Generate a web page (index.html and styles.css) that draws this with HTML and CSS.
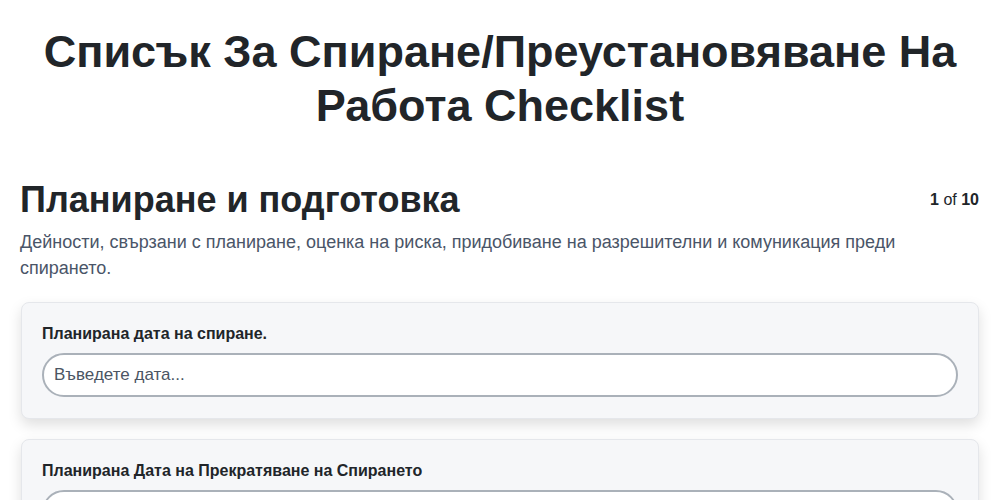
FILE: index.html
```html
<!DOCTYPE html>
<html lang="bg">
<head>
<meta charset="utf-8">
<link rel="stylesheet" href="styles.css">
</head>
<body>
<div class="page">
  <h1 class="title">Списък За Спиране/Преустановяване На Работа Checklist</h1>
  <section class="section">
    <div class="section-head">
      <h2 class="section-title">Планиране и подготовка</h2>
      <div class="counter"><b>1</b> of <b>10</b></div>
    </div>
    <p class="section-desc">Дейности, свързани с планиране, оценка на риска, придобиване на разрешителни и комуникация преди спирането.</p>
    <div class="card">
      <label class="field-label">Планирана дата на спиране.</label>
      <input class="field-input" type="text" placeholder="Въведете дата...">
    </div>
    <div class="card">
      <label class="field-label">Планирана Дата на Прекратяване на Спирането</label>
      <input class="field-input" type="text" placeholder="Въведете дата...">
    </div>
  </section>
</div>
</body>
</html>
```

FILE: styles.css
```css
html, body {
  margin: 0;
  padding: 0;
  background: #ffffff;
  font-family: "Liberation Sans", Arial, sans-serif;
  color: #212529;
}
.page {
  padding: 0 20px;
}
.title {
  margin: 25px 0 0;
  font-size: 45px;
  line-height: 54px;
  font-weight: 700;
  text-align: center;
  color: #212529;
}
.section {
  margin-top: 45px;
}
.section-head {
  display: flex;
  justify-content: space-between;
  align-items: center;
}
.section-title {
  margin: 0;
  font-size: 36px;
  line-height: 43px;
  font-weight: 700;
  color: #212529;
}
.counter {
  font-size: 16px;
  color: #212529;
  margin-right: 1px;
}
.section-desc {
  margin: 8px 0 21px;
  font-size: 18px;
  line-height: 26px;
  color: #4a5568;
}
.card {
  background: #f6f7f9;
  border: 1px solid #e5e7eb;
  border-radius: 8px;
  box-shadow: 0 6px 14px rgba(0, 0, 0, 0.13);
  padding: 20px 20px 21px;
  margin: 0 1px 20px;
  display: flex;
  flex-direction: column;
  gap: 9px;
}
.field-label {
  font-size: 16px;
  line-height: 21px;
  font-weight: 700;
  color: #212529;
}
.field-input {
  box-sizing: border-box;
  height: 44px;
  width: 100%;
  border: 2px solid #aab1b9;
  border-radius: 22px;
  background: #ffffff;
  padding: 0 10px;
  font-family: "Liberation Sans", Arial, sans-serif;
  font-size: 17px;
  color: #212529;
  outline: none;
}
.field-input::placeholder {
  color: #4b5563;
  opacity: 1;
}
```
